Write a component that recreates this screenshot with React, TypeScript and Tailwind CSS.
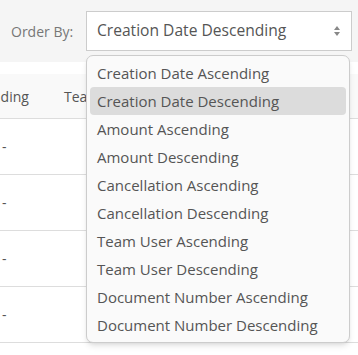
import React from 'react';

const options = [
  'Creation Date Ascending',
  'Creation Date Descending',
  'Amount Ascending',
  'Amount Descending',
  'Cancellation Ascending',
  'Cancellation Descending',
  'Team User Ascending',
  'Team User Descending',
  'Document Number Ascending',
  'Document Number Descending',
];

const App: React.FC = () => {
  const selected = 'Creation Date Descending';

  return (
    <div className="relative w-[358px] h-[355px] overflow-hidden bg-white text-[14px] text-[#555] font-['Open_Sans',sans-serif]">
      {/* Barre de tri */}
      <div className="h-[62px] bg-[#f5f5f5] flex items-center pl-[11px]">
        <span className="w-[75px] text-[#777]">Order By:</span>
        <div className="h-[40px] w-[266px] bg-white border border-[#ccc] flex items-center justify-between pl-[10px] pr-[10px]">
          <span className="text-[15.6px] text-[#555]">{selected}</span>
          <svg width="8" height="12" viewBox="0 0 8 12" className="fill-[#888]">
            <path d="M4 1 L7 5 H1 Z" />
            <path d="M4 11 L7 7 H1 Z" />
          </svg>
        </div>
      </div>

      {/* Tableau */}
      <div className="mt-[12px]">
        <div className="h-[45px] bg-[#f9f9f9] border-b border-[#ddd] flex items-center">
          <div className="w-[86px] overflow-hidden whitespace-nowrap flex">
            <span className="w-[72px] ml-[-8px] shrink-0">nding</span>
            <span className="shrink-0">Team User</span>
          </div>
        </div>
        {[0, 1, 2, 3].map((i) => (
          <div key={i} className="h-[56px] border-b border-[#ddd] flex items-center pl-[2px]">
            -
          </div>
        ))}
      </div>

      {/* Liste déroulante */}
      <div className="absolute left-[86px] top-[55px] w-[264px] bg-[#fafafa] border border-[#ccc] rounded-[7px] shadow-md py-[3px] px-[3px] text-[15px]">
        {options.map((opt) => (
          <div
            key={opt}
            className={`h-[28px] flex items-center pl-[7px] rounded-[4px] ${opt === selected ? 'bg-[#dcdcdc]' : ''}`}
          >
            {opt}
          </div>
        ))}
      </div>
    </div>
  );
};

export default App;
